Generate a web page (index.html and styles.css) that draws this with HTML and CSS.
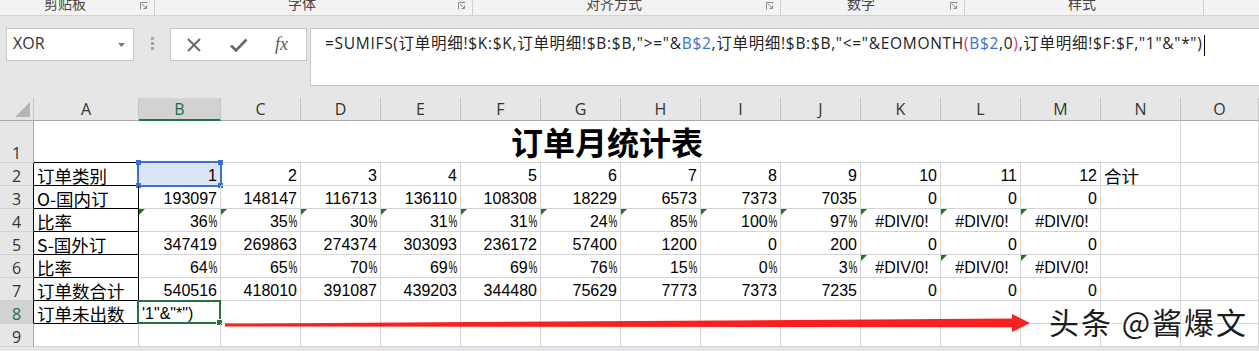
FILE: index.html
```html
<!DOCTYPE html>
<html lang="zh-CN">
<head>
<meta charset="utf-8">
<title>订单月统计表</title>
<link rel="stylesheet" href="styles.css">
</head>
<body>
<div class="ribbon">
  <div class="grp g1"><span class="glabel">剪贴板</span><svg class="launch" width="8" height="8" viewBox="0 0 8 8"><path d="M0.5 7.5V0.5H7.5" fill="none" stroke="#8a8a8a"/><path d="M2 2L6.5 6.5M6.5 3.5V6.5H3.5" fill="none" stroke="#8a8a8a"/></svg></div>
  <div class="grp g2"><span class="glabel">字体</span><svg class="launch" width="8" height="8" viewBox="0 0 8 8"><path d="M0.5 7.5V0.5H7.5" fill="none" stroke="#8a8a8a"/><path d="M2 2L6.5 6.5M6.5 3.5V6.5H3.5" fill="none" stroke="#8a8a8a"/></svg></div>
  <div class="grp g3"><span class="glabel">对齐方式</span><svg class="launch" width="8" height="8" viewBox="0 0 8 8"><path d="M0.5 7.5V0.5H7.5" fill="none" stroke="#8a8a8a"/><path d="M2 2L6.5 6.5M6.5 3.5V6.5H3.5" fill="none" stroke="#8a8a8a"/></svg></div>
  <div class="grp g4"><span class="glabel">数字</span><svg class="launch" width="8" height="8" viewBox="0 0 8 8"><path d="M0.5 7.5V0.5H7.5" fill="none" stroke="#8a8a8a"/><path d="M2 2L6.5 6.5M6.5 3.5V6.5H3.5" fill="none" stroke="#8a8a8a"/></svg></div>
  <div class="grp g5"><span class="glabel">样式</span></div>
</div>

<div class="fbar">
  <div class="namebox"><span>XOR</span><svg class="dd" width="7" height="4" viewBox="0 0 7 4"><path d="M0 0H7L3.5 4Z" fill="#7a7a7a"/></svg></div>
  <div class="dots"><i></i><i></i><i></i></div>
  <div class="btns">
    <svg class="ic-x" width="14" height="14" viewBox="0 0 14 14"><path d="M1 1L13 13M13 1L1 13" stroke="#6a6a6a" stroke-width="2"/></svg>
    <svg class="ic-ok" width="18" height="14" viewBox="0 0 18 14"><path d="M1 7.5L6 12.5L16.5 1.5" fill="none" stroke="#6a6a6a" stroke-width="2.6"/></svg>
    <span class="fx">fx</span>
  </div>
  <div class="formula"><span class="ftext">=SUMIFS(订单明细!$K:$K,订单明细!$B:$B,"&gt;="&amp;<span class="rb">B$2</span>,订单明细!$B:$B,"&lt;="&amp;EOMONTH<span class="rp">(</span><span class="rb">B$2</span>,0<span class="rp">)</span>,订单明细!$F:$F,"1"&amp;"*")</span><span class="caret"></span></div>
</div>

<div class="sheet">
  <!-- header -->
  <div class="corner"><svg width="34" height="23" viewBox="0 0 34 23"><path d="M15 19H30V4Z" fill="#b5b5b5"/></svg></div>
  <div class="h">A</div><div class="h hs">B</div><div class="h">C</div><div class="h">D</div><div class="h">E</div><div class="h">F</div><div class="h">G</div><div class="h">H</div><div class="h">I</div><div class="h">J</div><div class="h">K</div><div class="h">L</div><div class="h">M</div><div class="h">N</div><div class="h">O</div>

  <!-- row 1 -->
  <div class="rh">1</div>
  <div class="c title">订单月统计表</div>
  <div class="c"></div>

  <!-- row 2 -->
  <div class="rh rk">2</div>
  <div class="c a zh">订单类别</div>
  <div class="c b2">1<span class="sel"><i class="hd tl"></i><i class="hd tr"></i><i class="hd bl"></i><i class="hd br"></i></span></div>
  <div class="c">2</div><div class="c">3</div><div class="c">4</div><div class="c">5</div><div class="c">6</div><div class="c">7</div><div class="c">8</div><div class="c">9</div><div class="c">10</div><div class="c">11</div><div class="c">12</div>
  <div class="c l zh">合计</div><div class="c"></div>

  <!-- row 3 -->
  <div class="rh rk">3</div>
  <div class="c a zh">O-国内订</div>
  <div class="c">193097</div><div class="c">148147</div><div class="c">116713</div><div class="c">136110</div><div class="c">108308</div><div class="c">18229</div><div class="c">6573</div><div class="c">7373</div><div class="c">7035</div><div class="c">0</div><div class="c">0</div><div class="c">0</div>
  <div class="c"></div><div class="c"></div>

  <!-- row 4 -->
  <div class="rh rk">4</div>
  <div class="c a zh">比率</div>
  <div class="c t">36<span class="pct">%</span></div><div class="c t">35<span class="pct">%</span></div><div class="c t">30<span class="pct">%</span></div><div class="c t">31<span class="pct">%</span></div><div class="c t">31<span class="pct">%</span></div><div class="c t">24<span class="pct">%</span></div><div class="c t">85<span class="pct">%</span></div><div class="c t">100<span class="pct">%</span></div><div class="c t">97<span class="pct">%</span></div>
  <div class="c t e">#DIV/0!</div><div class="c t e">#DIV/0!</div><div class="c t e">#DIV/0!</div>
  <div class="c"></div><div class="c"></div>

  <!-- row 5 -->
  <div class="rh rk">5</div>
  <div class="c a zh">S-国外订</div>
  <div class="c">347419</div><div class="c">269863</div><div class="c">274374</div><div class="c">303093</div><div class="c">236172</div><div class="c">57400</div><div class="c">1200</div><div class="c">0</div><div class="c">200</div><div class="c">0</div><div class="c">0</div><div class="c">0</div>
  <div class="c"></div><div class="c"></div>

  <!-- row 6 -->
  <div class="rh rk">6</div>
  <div class="c a zh">比率</div>
  <div class="c">64<span class="pct">%</span></div><div class="c">65<span class="pct">%</span></div><div class="c">70<span class="pct">%</span></div><div class="c">69<span class="pct">%</span></div><div class="c">69<span class="pct">%</span></div><div class="c">76<span class="pct">%</span></div><div class="c">15<span class="pct">%</span></div><div class="c">0<span class="pct">%</span></div><div class="c">3<span class="pct">%</span></div>
  <div class="c t e">#DIV/0!</div><div class="c t e">#DIV/0!</div><div class="c t e">#DIV/0!</div>
  <div class="c"></div><div class="c"></div>

  <!-- row 7 -->
  <div class="rh rk">7</div>
  <div class="c a zh">订单数合计</div>
  <div class="c">540516</div><div class="c">418010</div><div class="c">391087</div><div class="c">439203</div><div class="c">344480</div><div class="c">75629</div><div class="c">7773</div><div class="c">7373</div><div class="c">7235</div><div class="c">0</div><div class="c">0</div><div class="c">0</div>
  <div class="c"></div><div class="c"></div>

  <!-- row 8 -->
  <div class="rh rk ra">8</div>
  <div class="c a zh">订单未出数</div>
  <div class="c l act">'1"&amp;"*")<span class="asel"><i class="hd2"></i></span></div>
  <div class="c"></div><div class="c"></div><div class="c"></div><div class="c"></div><div class="c"></div><div class="c"></div><div class="c"></div><div class="c"></div><div class="c"></div><div class="c"></div><div class="c"></div><div class="c"></div><div class="c"></div>

  <!-- row 9 -->
  <div class="rh">9</div>
  <div class="c"></div><div class="c"></div><div class="c"></div><div class="c"></div><div class="c"></div><div class="c"></div><div class="c"></div><div class="c"></div><div class="c"></div><div class="c"></div><div class="c"></div><div class="c"></div><div class="c"></div><div class="c"></div><div class="c"></div>
</div>

<svg class="arrow" width="1259" height="351" viewBox="0 0 1259 351"><path d="M225 323.6L1012 318.6V314L1030 323L1012 332V327.2L225 326.4Z" fill="#fb2020"/></svg>
<div class="mark">头条 @酱爆文</div>
</body>
</html>
```

FILE: styles.css
```css
html, body {
  margin: 0;
  padding: 0;
}
body {
  width: 1259px;
  height: 351px;
  overflow: hidden;
  position: relative;
  background: #e6e6e6;
  font-family: "Liberation Sans", "Noto Sans CJK SC", sans-serif;
}

/* ribbon group labels (top edge of the ribbon, partly scrolled out) */
.ribbon {
  display: flex;
  height: 15px;
  background: #f3f3f3;
  border-bottom: 1px solid #d4d4d4;
  overflow: hidden;
}
.grp {
  display: flex;
  align-items: flex-start;
  box-sizing: border-box;
  height: 15px;
  border-right: 1px solid #d0d0d0;
}
.g1 { width: 155px; padding-left: 44px; }
.g2 { width: 318px; padding-left: 133px; }
.g3 { width: 308px; padding-left: 113px; }
.g4 { width: 184px; padding-left: 66px; }
.g5 { width: 239px; padding-left: 103px; }
.glabel {
  font: 14px/14px "Noto Sans CJK SC", sans-serif;
  color: #444;
  margin-top: -4px;
  white-space: nowrap;
}
.launch {
  margin-left: auto;
  margin-right: 6px;
  margin-top: 2px;
}

/* formula bar area */
.fbar {
  display: flex;
  align-items: flex-start;
  height: 82px;
  box-sizing: border-box;
  padding-top: 12px;
}
.namebox {
  margin-left: 6px;
  width: 128px;
  height: 33px;
  box-sizing: border-box;
  background: #fff;
  border: 1px solid #c6c6c6;
  display: flex;
  align-items: flex-start;
  padding: 4px 8px 0 6px;
  font: 16px/20px "Open Sans", sans-serif;
  color: #333;
}
.namebox .dd {
  margin-left: auto;
  margin-top: 10px;
}
.dots {
  width: 36px;
  display: flex;
  flex-direction: column;
  align-items: center;
  gap: 2px;
  padding-top: 9px;
}
.dots i {
  display: block;
  width: 3px;
  height: 3px;
  background: #a8a8a8;
}
.btns {
  width: 137px;
  height: 33px;
  box-sizing: border-box;
  background: #fff;
  border: 1px solid #c6c6c6;
  display: flex;
  align-items: center;
  padding-left: 16px;
}
.ic-ok { margin-left: 29px; }
.fx {
  font: italic 18px/20px "Liberation Serif", serif;
  color: #5a5a5a;
  margin-left: 27px;
  margin-top: -2px;
}
.formula {
  margin-left: 3px;
  flex: 1;
  height: 58px;
  box-sizing: border-box;
  background: #fff;
  border: 1px solid #c6c6c6;
  border-right: none;
  padding: 4px 0 0 14px;
  font: 15.5px/20px "Open Sans", "Noto Sans CJK SC", sans-serif;
  color: #222;
  white-space: nowrap;
  overflow: hidden;
}
.ftext { letter-spacing: 0.7px; }
.rb { color: #3a6fd4; }
.rp { color: #d8346c; }
.caret {
  display: inline-block;
  width: 1px;
  height: 21px;
  background: #000;
  margin-left: 1px;
  vertical-align: -7px;
}

/* sheet */
.sheet {
  display: grid;
  grid-template-columns: 34px 105px 82px repeat(12, 80px) 1fr;
  grid-template-rows: 23px 42px repeat(8, 23px);
  background: #fff;
  font-size: 16px;
  color: #000;
}
.corner, .h {
  background: #e6e6e6;
  box-sizing: border-box;
  border-right: 1px solid #c4c4c4;
  border-bottom: 1px solid #a9a9a9;
}
.corner svg { display: block; }
.h {
  display: flex;
  align-items: center;
  justify-content: center;
  font: 16px/18px "Open Sans", sans-serif;
  color: #333;
}
.h.hs {
  background: #d2d2d2;
  color: #1f6b40;
  border-bottom: 2px solid #217346;
}
.rh {
  background: #e6e6e6;
  box-sizing: border-box;
  border-right: 1px solid #a9a9a9;
  border-bottom: 1px solid #d0d0d0;
  display: flex;
  align-items: flex-end;
  justify-content: center;
  font: 16px/18px "Open Sans", sans-serif;
  color: #333;
}
.rh.rk { border-right-color: #000; }
.rh.ra { background: #d2d2d2; color: #1f6b40; }

.c {
  position: relative;
  box-sizing: border-box;
  border-right: 1px solid #d4d4d4;
  border-bottom: 1px solid #d4d4d4;
  display: flex;
  align-items: flex-end;
  justify-content: flex-end;
  padding: 0 3px;
  line-height: 18px;
  white-space: nowrap;
}
.c.l { justify-content: flex-start; }
.c.e { justify-content: center; padding-left: 6px; }
.c.a {
  justify-content: flex-start;
  border-right-color: #000;
  border-bottom-color: #000;
}
.zh {
  font-family: "Noto Sans CJK SC", sans-serif;
  font-size: 17.5px;
}
.title {
  grid-column: span 14;
  justify-content: center;
  font: bold 32px/32px "Noto Sans CJK SC", sans-serif;
  padding-bottom: 6px;
  border-bottom: none;
  background:
    linear-gradient(#000, #000) 0 100% / 105px 1px no-repeat,
    linear-gradient(#d4d4d4, #d4d4d4) 0 100% / 100% 1px no-repeat,
    #fff;
}
.pct {
  display: inline-block;
  transform: scaleX(0.62);
  transform-origin: right center;
  margin-left: -5px;
}
.t::before {
  content: "";
  position: absolute;
  left: 0;
  top: 0;
  border-top: 6px solid #1c7a1c;
  border-right: 6px solid transparent;
}

.b2 { background: #dbe5f5; }
.sel {
  position: absolute;
  inset: -2px;
  border: 2px solid #3a6fd4;
}
.hd {
  position: absolute;
  width: 5px;
  height: 5px;
  background: #3a6fd4;
}
.tl { left: -3px; top: -3px; }
.tr { right: -3px; top: -3px; }
.bl { left: -3px; bottom: -3px; }
.br { right: -3px; bottom: -3px; }

.act { padding-left: 3px; }
.asel {
  position: absolute;
  top: -1px;
  right: -1px;
  bottom: -1px;
  left: -2px;
  border: 2px solid #217346;
}
.hd2 {
  position: absolute;
  right: -4px;
  bottom: -4px;
  width: 5px;
  height: 5px;
  background: #217346;
  border: 1px solid #fff;
}

.arrow {
  position: absolute;
  left: 0;
  top: 0;
  pointer-events: none;
}
.mark {
  position: absolute;
  left: 1049px;
  top: 301px;
  font: 30px/40px "Noto Sans CJK SC", sans-serif;
  letter-spacing: 2px;
  color: #1b1b1b;
  white-space: nowrap;
  text-shadow: 1px 1px 0 #fff, -1px -1px 0 #fff, 1px -1px 0 #fff, -1px 1px 0 #fff;
}
```
